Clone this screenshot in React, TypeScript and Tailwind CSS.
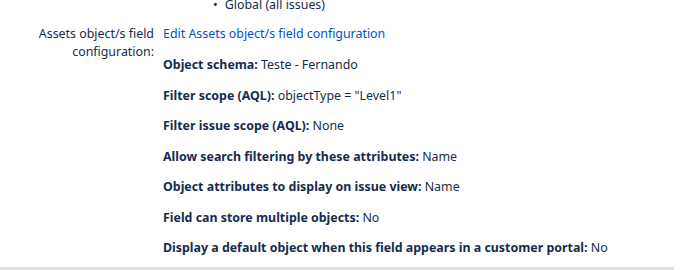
const rows: { label: string; value: string }[] = [
  { label: "Object schema:", value: "Teste - Fernando" },
  { label: "Filter scope (AQL):", value: 'objectType = "Level1"' },
  { label: "Filter issue scope (AQL):", value: "None" },
  { label: "Allow search filtering by these attributes:", value: "Name" },
  { label: "Object attributes to display on issue view:", value: "Name" },
  { label: "Field can store multiple objects:", value: "No" },
  { label: "Display a default object when this field appears in a customer portal:", value: "No" },
]

export default function App() {
  return (
    <div
      className="relative h-[270px] w-[681px] overflow-hidden bg-white text-[12.4px] text-[#172b4d]"
      style={{ fontFamily: '"Noto Sans", "Open Sans", sans-serif' }}
    >
      <ul className="-mt-[5px] ml-[213px] leading-[20px]">
        <li className="flex gap-[7px]">
          <span>•</span>
          <span>Global (all issues)</span>
        </li>
      </ul>

      <div className="mt-[9px] flex">
        <div className="w-[154px] shrink-0 pt-[1px] text-right leading-[18px] text-[#172b4d]">
          Assets object/s field
          <br />
          configuration:
        </div>
        <div className="ml-[9px] leading-[20px]">
          <a className="text-[#0052cc]">Edit Assets object/s field configuration</a>
          <div className="mt-[11px] flex flex-col gap-[10.5px]">
            {rows.map((r) => (
              <div key={r.label} className="whitespace-nowrap">
                <span className="font-bold">{r.label}</span> {r.value}
              </div>
            ))}
          </div>
        </div>
      </div>

      <div className="absolute bottom-0 left-0 h-[3px] w-[674px] bg-[#dfe1e6]" />
    </div>
  )
}
